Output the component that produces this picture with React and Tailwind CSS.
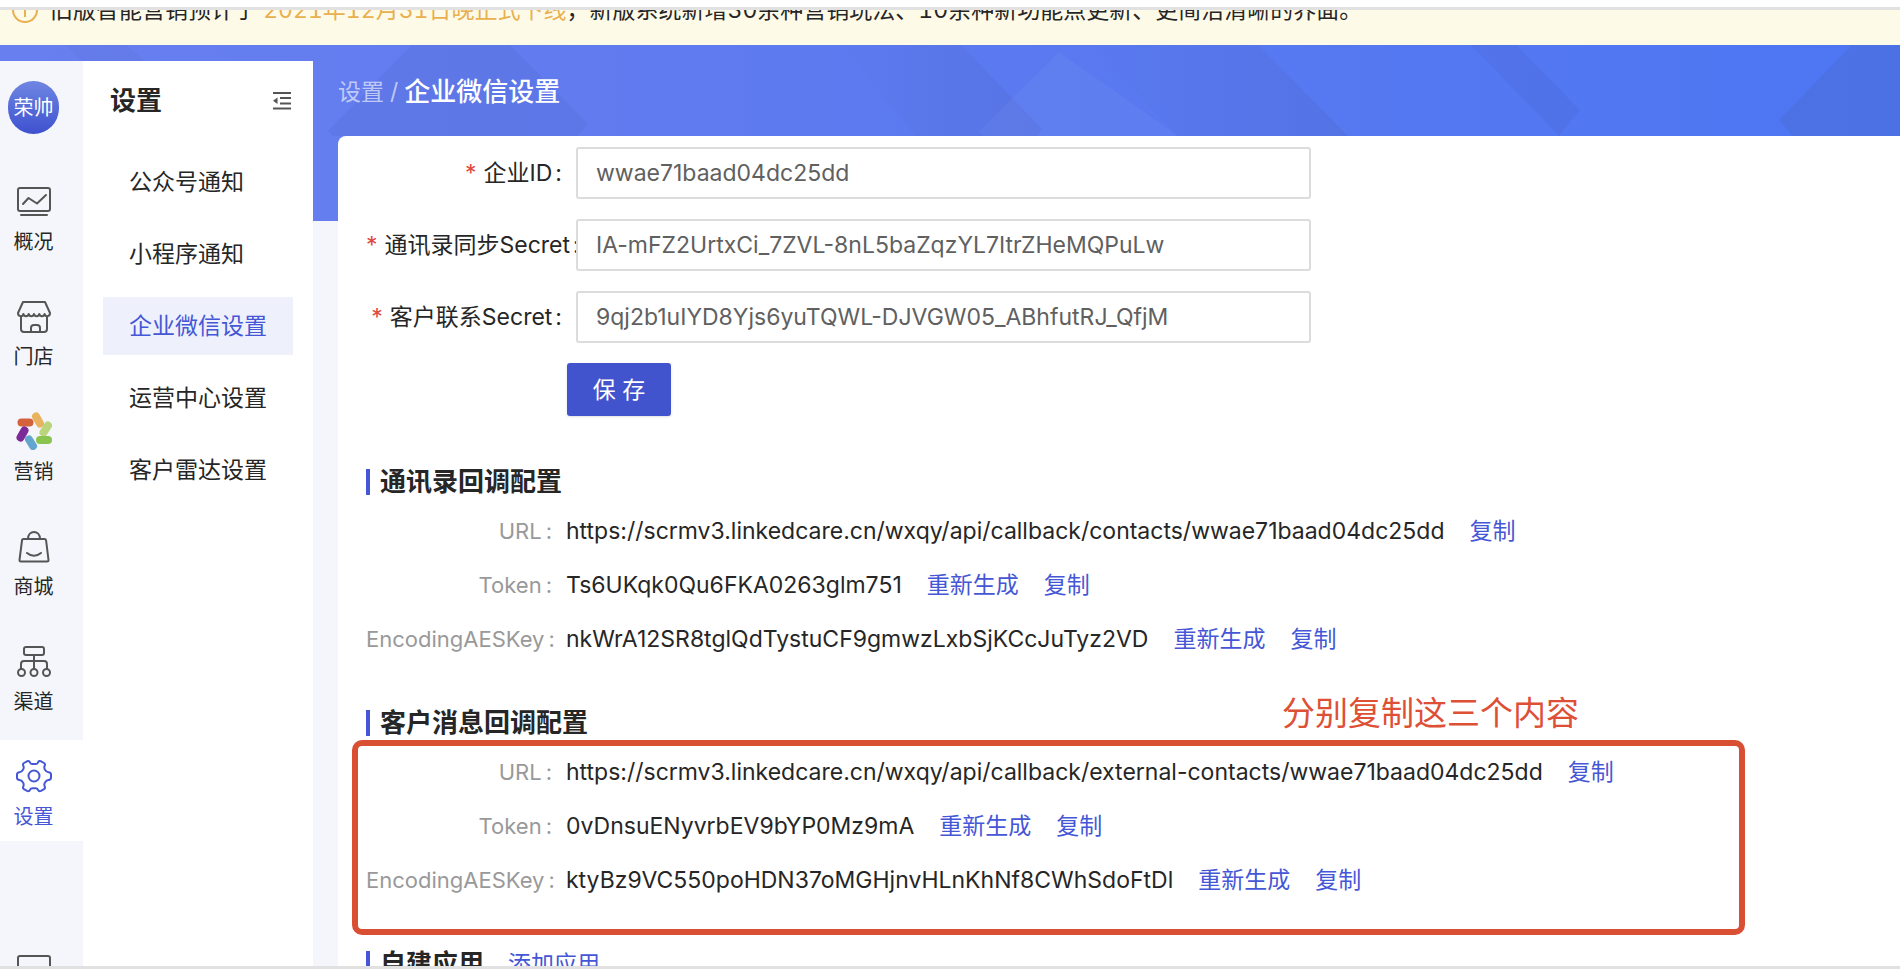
import React from "react";

const ICON = "size-[34px] fill-none stroke-[2]";

const OverviewIcon = () => (
    <svg viewBox="0 0 34 34" className={ICON} stroke="currentColor" strokeLinecap="round" strokeLinejoin="round">
        <rect x="1" y="4" width="32" height="23" rx="2" />
        <path d="M6 20l5.500-6 8.500 5.500 9-8.500M4 31h26" />
    </svg>
);

const StoreIcon = () => (
    <svg viewBox="0 0 34 34" className={ICON} stroke="currentColor" strokeLinecap="round" strokeLinejoin="round">
        <path d="M6 3h22l5 11c0 4-5 4-5.400 1-.6 3-4.700 3-5.300 0-.6 3-4.700 3-5.300 0-.6 3-4.700 3-5.300 0-.6 3-4.700 3-5.300 0C6 18 1 18 1 14z" />
        <path d="M4 18v12c0 2 1 3 3 3h20c2 0 3-1 3-3V18M14 33v-4c0-2 1-3 3-3h3c2 0 3 1 3 3v4" />
    </svg>
);

const MarketingIcon = () => (
    <svg viewBox="0 0 36 38" className="h-[38px] w-9 -my-[2px] fill-none stroke-[8]" strokeLinecap="round">
        <path d="M5.500 10.500h8" stroke="#d4623a" />
        <path d="M20 4.500l4 7" stroke="#e8b25e" />
        <path d="M32 13.500l-4.500 7" stroke="#bbd57d" />
        <path d="M24 28h8" stroke="#8bc34f" />
        <path d="M13 27.500l4 6.500" stroke="#62a5cf" />
        <path d="M8.500 18.500l-4 7" stroke="#7d2a99" />
    </svg>
);

const MallIcon = () => (
    <svg viewBox="0 0 34 34" className={ICON} stroke="currentColor" strokeLinecap="round" strokeLinejoin="round">
        <path d="M6.500 10h21c1 0 1.500.5 1.600 1.500L31.500 31c0 1-.5 1.500-1.500 1.500H4c-1 0-1.500-.5-1.500-1.500L5 11.500C5 10.500 5.500 10 6.500 10z" />
        <path d="M11 10C11 .5 23 .5 23 10M10 24c4 3.500 10 3.500 14 0" />
    </svg>
);

const ChannelIcon = () => (
    <svg viewBox="0 0 34 34" className={ICON} stroke="currentColor" strokeLinecap="round" strokeLinejoin="round">
        <rect x="7" y="3" width="20" height="8" rx="2" />
        <path d="M17 11v14M4 25v-5c0-2 1-3 3-3h20c2 0 3 1 3 3v5" />
        <circle cx="4.500" cy="28.500" r="3.500" />
        <circle cx="17" cy="28.500" r="3.500" />
        <circle cx="29.500" cy="28.500" r="3.500" />
    </svg>
);

const SettingsIcon = () => (
    <svg viewBox="0 0 36 34" className="h-[34px] w-9 fill-none stroke-[2]" stroke="currentColor" strokeLinejoin="round">
        <path d="M14 3.500c-.6-1.800-1.500-1.700-3-1.200L8 4c-1.200.7-1.300 1.500-.7 2.700.8 1.800.6 2.700-.3 4.100-1 1.800-1.600 2.400-3.400 2.400C1.700 13.300 1 14 1 15.500v3.300c0 1.600.7 2.100 2.500 2.200 1.900.1 2.500.7 3.500 2.500.9 1.500 1 2.300.3 4-.6 1.200-.4 2 .7 2.700l3 1.700c1.500.6 2.300.5 3-1.100.5-1.200 1-1.600 2.500-1.600h3c1.500 0 2 .4 2.500 1.600.7 1.600 1.500 1.700 3 1.100l3-1.700c1.100-.7 1.300-1.500.7-2.700-.7-1.700-.6-2.500.3-4 1-1.800 1.600-2.400 3.500-2.500 1.800-.1 2.500-.6 2.500-2.200v-3.300c0-1.500-.7-2.200-2.600-2.300-1.800 0-2.400-.6-3.400-2.400-.9-1.400-1.100-2.300-.3-4.100.6-1.200.5-2-.7-2.700l-3-1.700c-1.500-.5-2.400-.6-3 1.200-.4 1.200-1 1.600-2.500 1.600h-3c-1.500 0-2.100-.4-2.500-1.600z" />
        <circle cx="18" cy="17" r="5.500" />
    </svg>
);

const ScreenIcon = () => (
    <svg viewBox="0 0 34 34" className={ICON} stroke="currentColor" strokeLinejoin="round">
        <rect x="1" y="2" width="32" height="26" rx="2" />
    </svg>
);

const FoldIcon = () => (
    <svg viewBox="0 0 18 18" className="size-[18px]" fill="#555">
        <path d="M0 0h18v2H0zM7 5h11v2H7zM7 10.500h11v2H7zM0 15.500h18v2H0zM4.500 5.500v6.500L0 8.800z" />
    </svg>
);

const railItems = [
    { label: "概况", Icon: OverviewIcon },
    { label: "门店", Icon: StoreIcon },
    { label: "营销", Icon: MarketingIcon },
    { label: "商城", Icon: MallIcon },
    { label: "渠道", Icon: ChannelIcon },
    { label: "设置", Icon: SettingsIcon, active: true },
];

const menuItems = [
    { label: "公众号通知" },
    { label: "小程序通知" },
    { label: "企业微信设置", active: true },
    { label: "运营中心设置" },
    { label: "客户雷达设置" },
];

const fields = [
    { id: "corpId", label: "企业ID", value: "wwae71baad04dc25dd" },
    { id: "contactSecret", label: "通讯录同步Secret", value: "IA-mFZ2UrtxCi_7ZVL-8nL5baZqzYL7ItrZHeMQPuLw" },
    { id: "customerSecret", label: "客户联系Secret", value: "9qj2b1uIYD8Yjs6yuTQWL-DJVGW05_ABhfutRJ_QfjM" },
];

const contactRows = [
    { label: "URL", value: "https://scrmv3.linkedcare.cn/wxqy/api/callback/contacts/wwae71baad04dc25dd" },
    { label: "Token", value: "Ts6UKqk0Qu6FKA0263glm751", canReset: true },
    { label: "EncodingAESKey", value: "nkWrA12SR8tglQdTystuCF9gmwzLxbSjKCcJuTyz2VD", canReset: true },
];

const messageRows = [
    { label: "URL", value: "https://scrmv3.linkedcare.cn/wxqy/api/callback/external-contacts/wwae71baad04dc25dd" },
    { label: "Token", value: "0vDnsuENyvrbEV9bYP0Mz9mA", canReset: true },
    { label: "EncodingAESKey", value: "ktyBz9VC550poHDN37oMGHjnvHLnKhNf8CWhSdoFtDl", canReset: true },
];

// Blue header backdrop with faint diamonds
const Backdrop = () => (
    <svg
        viewBox="0 0 1900 176"
        preserveAspectRatio="xMidYMin slice"
        className="absolute inset-x-0 top-0 h-[176px] w-full"
        aria-hidden="true"
    >
        <defs>
            <linearGradient id="sky" x1="0" x2="1" y1="0" y2="0">
                <stop offset="0" stopColor="#687fef" />
                <stop offset="0.35" stopColor="#607bef" />
                <stop offset="1" stopColor="#4d76f3" />
            </linearGradient>
            <linearGradient id="shade" x1="0" x2="1" y1="0" y2="0">
                <stop offset="0.1" stopColor="#4a5fb8" stopOpacity="0.03" />
                <stop offset="1" stopColor="#4a5fb8" stopOpacity="0.22" />
            </linearGradient>
        </defs>
        <rect width="1900" height="176" fill="url(#sky)" />
        <path d="M66 0h60l19 16H82z" fill="#4a5fb8" fillOpacity="0.1" />
        <path d="M407 5l-79 81 5 5h244l11-12L510 0H412z" fill="#4a5fb8" fillOpacity="0.14" />
        <path d="M841 0h120l81 84-5 7H915z" fill="url(#shade)" />
        <path d="M1090 0h168l90 91h-170z" fill="url(#shade)" />
        <path d="M1059 7l-80 79 4 5h195z" fill="#7f97f2" fillOpacity="0.15" />
        <path d="M1471 0h45l64 65-21 26z" fill="#4a5fb8" fillOpacity="0.16" />
        <path d="M1852 0h48v91h-107l-14-16z" fill="#4a66c4" fillOpacity="0.3" />
    </svg>
);

const TextButton = ({ children }) => (
    <button type="button" className="ml-[25px] shrink-0 text-[#4557d6]">
        {children}
    </button>
);

const SectionTitle = ({ children }) => (
    <h2 className="flex h-9 items-center gap-[10px] text-[26px] font-bold">
        <span className="h-[26px] w-1 bg-[#4557d6]" />
        {children}
    </h2>
);

const ConfigRows = ({ rows }) => (
    <dl>
        {rows.map((row) => (
            <div key={row.label} className="flex h-[54px] items-center whitespace-nowrap">
                <dt className="w-[200px] shrink-0 pr-[14px] text-right text-[22px] text-[#999]">
                    {row.label}
                    <span className="ml-1">:</span>
                </dt>
                <dd className="flex items-center">
                    {row.value}
                    {row.canReset && <TextButton>重新生成</TextButton>}
                    <TextButton>复制</TextButton>
                </dd>
            </div>
        ))}
    </dl>
);

const App = () => {
    return (
        <div className="flex h-screen flex-col overflow-hidden bg-white pt-[7px] pb-px font-['Inter','Noto_Sans_CJK_SC',sans-serif] text-[23px] leading-8 text-[#262626]">
            <div className="flex min-h-0 flex-1 flex-col overflow-hidden border-y-[3px] border-[#e1e1e1]">
                {/* Notice */}
                <div className="h-[35px] shrink-0 overflow-hidden bg-[#fefae8]">
                    <p className="-mt-4 flex items-center whitespace-nowrap tabular-nums">
                        <svg viewBox="0 0 26 26" className="mr-3 ml-3 size-[26px] fill-none stroke-[2]" stroke="#e8b04e">
                            <circle cx="13" cy="13" r="12" />
                            <path d="M13 7v2M13 11v9" />
                        </svg>
                        <span>
                            旧版智能营销预计于 <span className="text-[#e8b04e]">2021年12月31日晚正式下线</span>
                            ，新版系统新增30余种营销玩法、10余种新功能点更新、更简洁清晰的界面。
                        </span>
                    </p>
                </div>

                <div className="relative flex min-h-0 flex-1 bg-[#f4f6fc]">
                    <Backdrop />

                    {/* Icon rail */}
                    <nav className="relative mt-4 flex w-[83px] shrink-0 flex-col gap-[14px] overflow-hidden bg-[#f5f6fb] pt-5">
                        <div className="mb-[17px] ml-2 flex h-[53px] w-[51px] shrink-0 items-center justify-center rounded-full bg-linear-to-b from-[#6f86e2] to-[#3f50cf] text-[20px] text-white">
                            荣帅
                        </div>
                        {railItems.map(({ label, Icon, active }) => (
                            <a
                                key={label}
                                href="#"
                                className={`flex shrink-0 flex-col items-center gap-[10px] pt-[19px] pr-4 pb-[10px] text-[20px] leading-7 ${active ? "bg-white text-[#4557d6]" : ""}`}
                            >
                                <span className={active ? "" : "text-[#555]"}>
                                    <Icon />
                                </span>
                                {label}
                            </a>
                        ))}
                        <a href="#" aria-label="工作台" className="mt-20 flex shrink-0 justify-center pt-[19px] pr-4 text-[#555]">
                            <ScreenIcon />
                        </a>
                    </nav>

                    {/* Settings menu */}
                    <aside className="relative mt-4 w-[230px] shrink-0 bg-white px-5 pt-6">
                        <div className="mb-9 flex items-center justify-between pr-[2px] pl-[7px]">
                            <h1 className="text-[26px] font-bold">设置</h1>
                            <button type="button" aria-label="收起菜单">
                                <FoldIcon />
                            </button>
                        </div>
                        <ul className="flex flex-col gap-[14px]">
                            {menuItems.map((item) => (
                                <li key={item.label}>
                                    <a
                                        href="#"
                                        className={`flex h-[58px] items-center pl-[26px] ${item.active ? "bg-[#eef1fb] text-[#4557d6]" : ""}`}
                                    >
                                        {item.label}
                                    </a>
                                </li>
                            ))}
                        </ul>
                    </aside>

                    <main className="relative flex min-w-0 flex-1 flex-col pl-[25px]">
                        <div className="flex h-[91px] shrink-0 items-center gap-[6px] pt-[2px] text-white">
                            <a href="#" className="text-white/60">
                                设置
                            </a>
                            <span className="text-white/60">/</span>
                            <span className="text-[26px] font-medium">企业微信设置</span>
                        </div>

                        <div className="min-h-0 flex-1 overflow-hidden rounded-tl-lg bg-white pt-[11px] pl-7">
                            <form className="flex flex-col gap-5" onSubmit={(e) => e.preventDefault()}>
                                {fields.map((field) => (
                                    <div key={field.id} className="flex items-center">
                                        <label htmlFor={field.id} className="w-[210px] shrink-0 pr-[14px] text-right whitespace-nowrap">
                                            <span className="mr-[7px] text-[#e0483e]">*</span>
                                            {field.label}
                                            <span className="ml-[3px]">:</span>
                                        </label>
                                        <input
                                            id={field.id}
                                            type="text"
                                            defaultValue={field.value}
                                            className="relative h-[52px] w-[735px] rounded-[3px] border-2 border-[#dcdcdc] bg-white px-[18px] text-[#606060] outline-none"
                                        />
                                    </div>
                                ))}
                                <button
                                    type="submit"
                                    className="ml-[201px] h-[53px] w-[104px] rounded-[3px] bg-[#4254cd] text-white shadow-sm"
                                >
                                    保 存
                                </button>
                            </form>

                            <div className="mt-12 flex flex-col gap-[39px]">
                                <section className="flex flex-col gap-1">
                                    <SectionTitle>通讯录回调配置</SectionTitle>
                                    <ConfigRows rows={contactRows} />
                                </section>

                                <section className="relative flex flex-col gap-1">
                                    <SectionTitle>客户消息回调配置</SectionTitle>
                                    <ConfigRows rows={messageRows} />
                                    {/* Markup drawn over the section */}
                                    <div className="pointer-events-none absolute top-[35px] -left-[14px] h-[195px] w-[1393px] rounded-[10px] border-[6px] border-[#d94f34]" />
                                    <p className="absolute -top-4 left-[916px] text-[33px] leading-12 text-[#dd5036]">
                                        分别复制这三个内容
                                    </p>
                                </section>

                                <section className="flex items-center gap-6">
                                    <SectionTitle>自建应用</SectionTitle>
                                    <a href="#" className="text-[#4557d6]">
                                        添加应用
                                    </a>
                                </section>
                            </div>
                        </div>
                    </main>
                </div>
            </div>
        </div>
    );
};

export default App;
